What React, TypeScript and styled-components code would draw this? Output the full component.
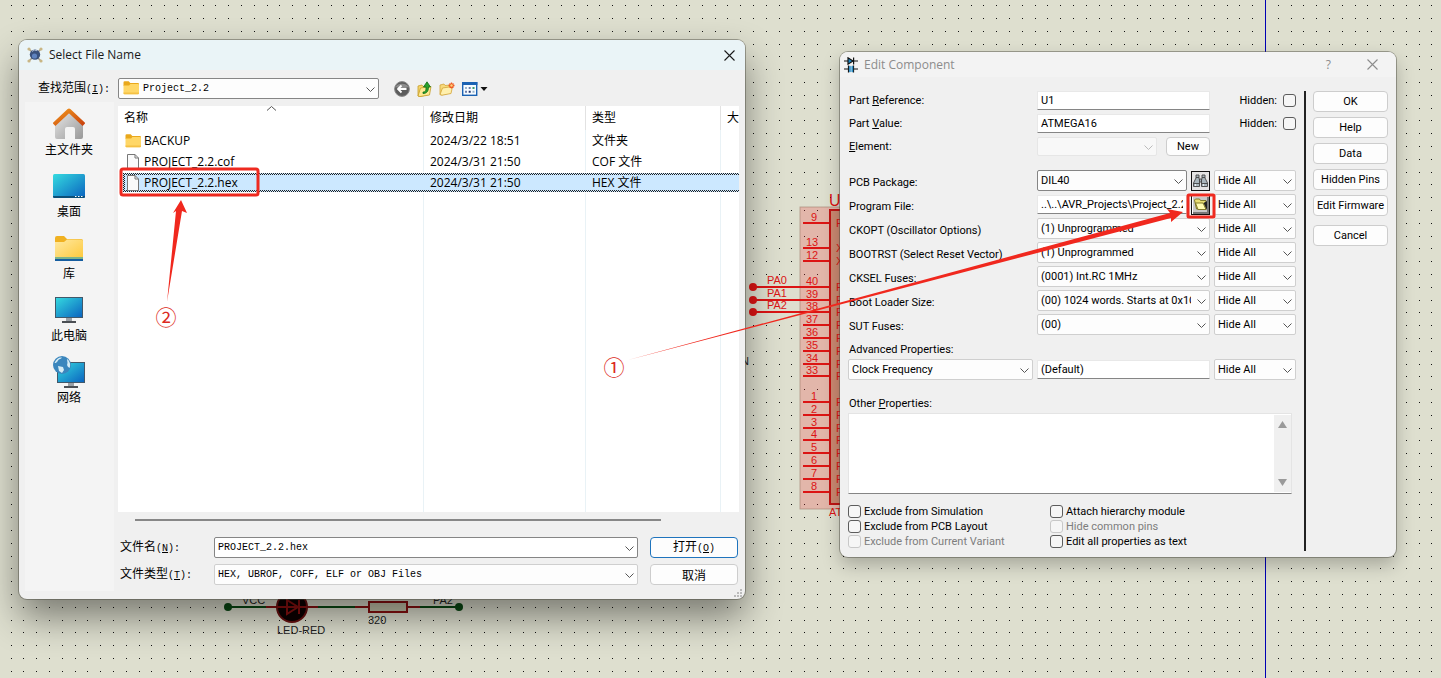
import React from "react";
import styled, { createGlobalStyle, css } from "styled-components";

const ui = `"Liberation Sans", "Noto Sans CJK SC", sans-serif`;
const dialog = `Roboto, "Liberation Sans", sans-serif`;
const shell = `"Open Sans", "Noto Sans CJK SC", sans-serif`;
const mono = `"Liberation Mono", "Noto Sans CJK SC", monospace`;

const GlobalStyle = createGlobalStyle`
  *, *::before, *::after { box-sizing: border-box; }
  body { margin: 0; background: #dedfcf; overflow: hidden; }
  button, input, select, textarea { font: inherit; color: inherit; margin: 0; }
`;

/* ---------- desktop ---------- */

const Desktop = styled.main`
  position: relative;
  min-height: 100vh;
  overflow: hidden;
  color: #000;
`;

const Layer = styled.svg`
  position: absolute;
  inset: 0;
  width: 100%;
  height: 100%;
  pointer-events: none;
  font-family: ${ui};
`;

const Window = styled.section<{ $x: number; $y: number; $w: number; $active?: boolean }>`
  position: absolute;
  left: ${(p) => p.$x}px;
  top: ${(p) => p.$y}px;
  width: ${(p) => p.$w}px;
  border-radius: 8px;
  overflow: hidden;
  background: #f0f0f0;
  font-family: ${dialog};
  font-size: 11px;
  line-height: 14px;
  box-shadow: 0 0 0 1px rgba(70, 70, 60, 0.45),
    ${(p) => (p.$active ? "0 18px 36px rgba(0, 0, 0, 0.45)" : "0 8px 18px rgba(0, 0, 0, 0.25)")};
`;

const TitleBar = styled.header<{ $active?: boolean }>`
  display: flex;
  align-items: center;
  height: ${(p) => (p.$active ? 30 : 25)}px;
  padding: 0 ${(p) => (p.$active ? 10 : 18)}px 0 ${(p) => (p.$active ? 8 : 4)}px;
  gap: 6px;
  background: ${(p) => (p.$active ? "#eaf4f7" : "#f3f3f3")};
  color: ${(p) => (p.$active ? "#1a1a1a" : "#8c8c8c")};
  font-family: ${shell};
  font-size: 12px;
  line-height: 16px;
`;

const Title = styled.h1`
  flex: 1;
  margin: 0;
  font: inherit;
`;

const PlainButton = styled.button`
  display: flex;
  align-items: center;
  justify-content: center;
  padding: 0;
  border: 0;
  background: none;
`;

const CaptionButtons = styled.div`
  display: flex;
  gap: 36px;
`;

/* ---------- shared controls ---------- */

const SelectBox = styled.span`
  position: relative;
  display: block;
  min-width: 0;
  flex: 1;
`;

type Tone = "strong" | "soft" | "off";

const SelectEl = styled.select<{ $tone: Tone; $h: number; $indent?: number }>`
  display: block;
  width: 100%;
  height: ${(p) => p.$h}px;
  padding: 0 18px 0 ${(p) => p.$indent ?? 3}px;
  appearance: none;
  border: 1px solid ${(p) => (p.$tone === "strong" ? "#858585" : p.$tone === "soft" ? "#cfcfcf" : "#e6e6e6")};
  border-radius: 2px;
  background: ${(p) => (p.$tone === "off" ? "#f8f8f8" : "#fdfdfd")};
  opacity: 1;
`;

const SelectMark = styled.svg<{ $off?: boolean }>`
  position: absolute;
  right: 4px;
  top: 50%;
  width: 9px;
  height: 5px;
  margin-top: -2px;
  pointer-events: none;
  fill: none;
  stroke: ${(p) => (p.$off ? "#bbb" : "#555")};
`;

const LeadIcon = styled.span`
  position: absolute;
  left: 5px;
  top: 3px;
  display: flex;
  pointer-events: none;
`;

const Chevron = ({ off }: { off?: boolean }) => (
  <SelectMark $off={off} viewBox="0 0 9 5">
    <path d="M.5 .5l4 4 4-4" />
  </SelectMark>
);

function Select(p: {
  value: string;
  label?: string;
  id?: string;
  tone?: Tone;
  height?: number;
  indent?: number;
  icon?: React.ReactNode;
}) {
  const off = p.tone === "off";
  return (
    <SelectBox>
      <SelectEl
        id={p.id}
        aria-label={p.label}
        $tone={p.tone ?? "soft"}
        $h={p.height ?? 21}
        $indent={p.indent}
        disabled={off}
      >
        <option>{p.value}</option>
      </SelectEl>
      {p.icon && <LeadIcon>{p.icon}</LeadIcon>}
      <Chevron off={off} />
    </SelectBox>
  );
}

const TextInput = styled.input`
  flex: 1;
  min-width: 0;
  width: 100%;
  height: 19px;
  padding: 0 3px;
  border: 1px solid #e8e8e8;
  border-bottom-color: #858585;
  border-radius: 1px;
  background: #fff;
`;

const Button = styled.button<{ $primary?: boolean }>`
  padding: 0;
  border: 1px solid ${(p) => (p.$primary ? "#1f74bd" : "#cdcdcd")};
  border-radius: 4px;
  background: #fdfdfd;
  text-align: center;
  white-space: nowrap;
`;

/* ---------- file dialog ---------- */

const FileBody = styled.div`
  padding: 8px 6px;
  font-family: ${shell};
  font-size: 12px;
  line-height: 16px;
`;

const LookIn = styled.div`
  display: flex;
  align-items: center;
  padding-left: 13px;
  font-family: ${mono};
  font-size: 10px;
`;

const FieldLabel = styled.label<{ $w?: number }>`
  width: ${(p) => (p.$w ? `${p.$w}px` : "auto")};
  font-family: "Noto Sans CJK SC", sans-serif;
  font-size: 12px;
  white-space: nowrap;
`;

const Key = styled.span`
  font-family: ${mono};
  font-size: 10px;
`;

const Folders = styled.div`
  flex: 0 0 261px;
  display: flex;
`;

const Tools = styled.div`
  display: flex;
  align-items: center;
  gap: 7px;
  margin-left: 15px;
`;

const Content = styled.div`
  display: flex;
  gap: 4px;
  margin-top: 3px;
`;

const Places = styled.nav`
  flex: 0 0 89px;
  display: flex;
  flex-direction: column;
  gap: 12px;
  padding: 6px 1px 0 0;
  background: #f4f4f4;
`;

const Place = styled.button`
  display: flex;
  flex-direction: column;
  align-items: center;
  gap: 2px;
  padding: 0;
  border: 0;
  background: none;
`;

const Panel = styled.div`
  flex: 1;
  min-width: 0;
  padding: 4px 0 6px;
`;

const FileList = styled.div`
  height: 406px;
  padding-left: 5px;
  background: #fff;
  overflow: hidden;
`;

const Table = styled.table`
  width: 100%;
  height: 100%;
  table-layout: fixed;
  border-collapse: separate;
  border-spacing: 0;

  th, td {
    padding: 0 0 0 6px;
    border-left: 1px solid #e9f2f6;
    font-weight: 400;
    text-align: left;
    white-space: nowrap;
    overflow: hidden;
  }
  th { height: 24px; border-left-color: #e2e2e2; position: relative; }
  th:first-child, td:first-child { padding-left: 1px; border-left: 0; }
`;

const Col = styled.col<{ $w?: number }>`
  width: ${(p) => (p.$w ? `${p.$w}px` : "auto")};
`;

const Row = styled.tr<{ $selected?: boolean }>`
  height: 21px;
  ${(p) =>
    p.$selected &&
    css`
      background: linear-gradient(#fff, #fff) 0 0 / 100% 1px no-repeat,
        linear-gradient(#fff, #fff) 0 100% / 100% 1px no-repeat,
        linear-gradient(#cce8ff, #cce8ff) 2px 3px / 100% 15px no-repeat,
        repeating-conic-gradient(#222 0 25%, #cce8ff 0 50%) 0 0 / 2px 2px;
      td { border-left-color: transparent; }
    `}
  td { height: 21px; }
`;

const NameCell = styled.span`
  display: flex;
  align-items: center;
  gap: 2px;
  padding-left: 1px;
  svg { flex: none; }
`;

const SortMark = styled.svg`
  position: absolute;
  left: 143px;
  top: 0;
`;

const ScrollBar = styled.div`
  height: 2px;
  margin: 7px 78px 0 17px;
  background: #878787;
`;

const FileForm = styled.div`
  display: grid;
  grid-template-columns: 94px 1fr 88px;
  grid-auto-rows: 21px;
  align-items: center;
  row-gap: 6px;
  margin: 16px 1px 0 2px;
  font-family: ${mono};
  font-size: 10px;
`;

const Combo = styled.div`
  position: relative;
  margin-right: 12px;
`;

const ComboInput = styled.input`
  display: block;
  width: 100%;
  height: 21px;
  padding: 0 18px 0 3px;
  border: 1px solid #858585;
  border-radius: 2px;
  background: #fff;
`;

const FormButton = styled(Button)`
  height: 21px;
  font-family: "Noto Sans CJK SC", sans-serif;
  font-size: 12px;
  line-height: 14px;
`;

const Grip = styled.svg`
  position: absolute;
  right: 3px;
  bottom: 2px;
`;

/* ---------- component dialog ---------- */

const EditBody = styled.div`
  display: flex;
  padding: 14px 8px 6px;
`;

const Main = styled.div`
  flex: 1;
  min-width: 0;
`;

const Rows = styled.div<{ $h: number; $gap: number; $top?: number }>`
  display: grid;
  grid-template-columns: 185px 1fr 82px;
  grid-auto-rows: ${(p) => p.$h}px;
  column-gap: 4px;
  row-gap: ${(p) => p.$gap}px;
  align-items: center;
  margin-top: ${(p) => p.$top ?? 0}px;
`;

const RowLabel = styled.label<{ $low?: boolean }>`
  padding: ${(p) => (p.$low ? 5 : 0)}px 0 0 1px;
  white-space: nowrap;
`;

const BlockLabel = styled.label<{ $top: number }>`
  display: block;
  margin-top: ${(p) => p.$top}px;
  padding-left: 1px;
  margin-bottom: 2px;
`;

const Field = styled.div`
  display: flex;
  align-items: center;
  gap: 4px;
  min-width: 0;
`;

const HiddenLabel = styled.label`
  display: flex;
  align-items: center;
  justify-content: flex-end;
  gap: 6px;
`;

const Check = styled.input`
  appearance: none;
  flex: none;
  width: 13px;
  height: 13px;
  border: 1px solid #5c5c5c;
  border-radius: 3px;
  background: #f6f6f6;
  &:disabled { border-color: #c8c8c8; }
`;

const NewButton = styled(Button)`
  width: 44px;
  height: 19px;
  margin-left: 5px;
`;

const ToolButton = styled.button<{ $raised?: boolean }>`
  display: flex;
  align-items: center;
  justify-content: center;
  width: 19px;
  height: 20px;
  padding: 0;
  border: 1px solid #111;
  background: ${(p) => (p.$raised ? "#c8c8c8" : "#e4e4e4")};
  ${(p) => p.$raised && "box-shadow: inset 1px 1px #fff, inset -2px -2px #777;"}
`;

const MemoBox = styled.div`
  display: flex;
  height: 81px;
  margin-right: 4px;
  padding-top: 1px;
  border: 1px solid #e4e4e4;
  border-bottom-color: #858585;
  background: #fff;
`;

const Memo = styled.textarea`
  flex: 1;
  padding: 2px;
  border: 0;
  resize: none;
  overflow: hidden;
  background: transparent;
`;

const MemoScroll = styled.div`
  display: flex;
  flex-direction: column;
  justify-content: space-between;
  align-items: center;
  width: 17px;
  padding: 6px 0;
  margin-bottom: 1px;
  background: #f0f0f0;
`;

const Options = styled.div`
  display: grid;
  grid-template-columns: 202px 1fr;
  grid-auto-rows: 15px;
  margin-top: 10px;
`;

const Option = styled.label<{ $off?: boolean }>`
  display: flex;
  align-items: center;
  gap: 3px;
  color: ${(p) => (p.$off ? "#7d7d7d" : "#000")};
`;

const Actions = styled.div`
  display: flex;
  flex-direction: column;
  gap: 5px;
  width: 84px;
  min-height: 460px;
  margin-left: 8px;
  padding-left: 7px;
  border-left: 2px solid #222;
`;

const Action = styled(Button)<{ $apart?: boolean }>`
  height: 21px;
  margin-top: ${(p) => (p.$apart ? 4 : 0)}px;
`;

/* ---------- icons ---------- */

const CloseIcon = () => (
  <svg width="11" height="11" viewBox="0 0 11 11" fill="none" stroke="currentColor" strokeWidth="1.1">
    <path d="M.5.5l10 10M10.5.5l-10 10" />
  </svg>
);

const AppIcon = () => (
  <svg width="16" height="16" viewBox="0 0 16 16">
    <path d="M2 2l12 12M14 2L2 14" stroke="#a9a08c" strokeWidth="1.6" />
    <g fill="#c9b684">
      <circle cx="2" cy="2" r="1.6" />
      <circle cx="14" cy="2" r="1.6" />
      <circle cx="2" cy="14" r="1.6" />
      <circle cx="14" cy="14" r="1.6" />
    </g>
    <circle cx="8" cy="7.6" r="5.2" fill="#39517c" />
    <circle cx="7.500" cy="9" r="2.6" fill="#5f83bf" />
    <path d="M5 4.500a4 4 0 0 1 5-.8" stroke="#aab8d0" fill="none" />
  </svg>
);

const PartIcon = () => (
  <svg width="14" height="16" viewBox="0 0 14 16" stroke="#111" strokeWidth="1.2">
    <path d="M0 4h14M0 12h4M10 12h4" />
    <path d="M4 .8v6.4L9 4z" fill="#1b86c4" />
    <path d="M9.6.5v7M4.5 8.5v7M9.5 8.5v7" />
    <path d="M5.4 9.2h1v5.6h-1zM7.8 9.2h1v5.6h-1z" fill="#1b86c4" stroke="#1b86c4" strokeWidth=".6" />
  </svg>
);

const FolderIcon = () => (
  <svg width="17" height="14" viewBox="0 0 17 14">
    <path d="M.5 1.5A1.2 1.2 0 0 1 1.7.3h4l1.6 1.6H15a1 1 0 0 1 1 1V5H.5z" fill="#e9a81c" />
    <path d="M.5 4.6h5.6l1.3-1.7H15a1 1 0 0 1 1 1v8.3a1 1 0 0 1-1 1H1.500a1 1 0 0 1-1-1z" fill="#ffd767" />
    <path d="M.5 11.500v.7a1 1 0 0 0 1 1H15a1 1 0 0 0 1-1v-.7z" fill="#f5c144" />
  </svg>
);

const PageIcon = () => (
  <svg width="17" height="16" viewBox="0 0 17 16" fill="#fafafa" stroke="#777">
    <path d="M2.500.5h7.500l3.500 3.500v11.500h-11z" />
    <path d="M10 .5v3.500h3.500" fill="none" />
  </svg>
);

const BackIcon = () => (
  <svg width="16" height="16" viewBox="0 0 16 16">
    <circle cx="8" cy="8" r="7.4" fill="#5c5c5c" stroke="#8b8b8b" />
    <path d="M1.500 6a7 5 0 0 1 13 0A9 4 0 0 1 1.500 6" fill="#8d8d8d" />
    <path d="M12.500 8h-8M7.500 4.500L4 8l3.500 3.500" fill="none" stroke="#fff" strokeWidth="1.8" />
  </svg>
);

const UpIcon = () => (
  <svg width="15" height="16" viewBox="0 0 15 16">
    <path d="M1 5l4-1 1 1.500 6-1v9L3 15.500 1 15z" fill="#f4d56c" stroke="#c79d28" strokeWidth=".8" />
    <path d="M1 15l2.500-8L14 5.500 12.500 14 3 15.500z" fill="#ffe991" stroke="#c79d28" strokeWidth=".8" />
    <path d="M6 11c3 0 3-2 3-5H6.500L10 .8 13.500 6h-2c0 4-1.500 6.500-5.500 6.500z" fill="#2ba02b" stroke="#14701a" strokeWidth=".8" />
  </svg>
);

const NewFolderIcon = () => (
  <svg width="16" height="14" viewBox="0 0 16 14">
    <path d="M1 3l4-1 1 1.500 5-.5v8L2.500 13 1 12.500z" fill="#f8da7b" stroke="#d3a53a" strokeWidth=".8" />
    <path d="M1 12.500L3.500 6 13.500 4.500 12 11.500 3 13.200z" fill="#fff0ad" stroke="#d3a53a" strokeWidth=".8" />
    <path d="M12.500 .5v6M9.500 3.500h6M10.500 1.500l4 4M14.500 1.500l-4 4" stroke="#ee5b24" strokeWidth="1.300" />
    <circle cx="12.500" cy="3.500" r="1.200" fill="#ffd27a" />
  </svg>
);

const ViewIcon = () => (
  <svg width="26" height="14" viewBox="0 0 26 14">
    <rect x=".7" y=".7" width="14" height="12.600" fill="#f6fbff" stroke="#1b62b3" strokeWidth="1.400" />
    <path d="M0 0h15.400v3H0z" fill="#1b62b3" />
    <path d="M3 5h2v2H3zM10.500 8.800h2v2h-2z" fill="#9bb4cc" />
    <path d="M6.700 5h2v2h-2zM3 8.800h2v2H3z" fill="#6c7ca8" />
    <path d="M10.500 5h2v2h-2z" fill="#3b9b6a" />
    <path d="M6.700 8.800h2v2h-2z" fill="#22336c" />
    <path d="M18.500 5h7l-3.500 4z" fill="#111" />
  </svg>
);

const HomeIcon = () => (
  <svg width="32" height="32" viewBox="0 0 32 32">
    <defs>
      <linearGradient id="wall" x2="1" y2="1">
        <stop stopColor="#e8e8e8" />
        <stop offset="1" stopColor="#989898" />
      </linearGradient>
      <linearGradient id="roof" x2="1" y2="1">
        <stop stopColor="#f0951d" />
        <stop offset="1" stopColor="#c9420e" />
      </linearGradient>
    </defs>
    <path d="M2 15L16 3l14 12v14a2 2 0 0 1-2 2h-6V21a2 2 0 0 0-2-2h-6a2 2 0 0 0-2 2v10H4a2 2 0 0 1-2-2z" fill="url(#wall)" />
    <path d="M1 16.500L16 2.500l15 14" fill="none" stroke="url(#roof)" strokeWidth="4" strokeLinejoin="round" />
  </svg>
);

const ScreenGradient = ({ id }: { id: string }) => (
  <defs>
    <linearGradient id={id} x2="1" y2="1">
      <stop stopColor="#35dbe0" />
      <stop offset="1" stopColor="#0a62bf" />
    </linearGradient>
  </defs>
);

const DesktopIcon = () => (
  <svg width="32" height="32" viewBox="0 0 32 32">
    <ScreenGradient id="desk" />
    <rect y="4" width="32" height="24" rx="1.500" fill="url(#desk)" />
    <path d="M0 26h32v.5a1.500 1.500 0 0 1-1.500 1.500h-29A1.500 1.500 0 0 1 0 26.500z" fill="#0b4f78" />
    <path d="M22 26.500h1.500M25 26.500h1.500M28 26.500h1.500" stroke="#fff" />
  </svg>
);

const LibraryIcon = () => (
  <svg width="32" height="32" viewBox="0 0 32 32">
    <defs>
      <linearGradient id="lib" x2="1" y2="1">
        <stop stopColor="#ffe9a2" />
        <stop offset="1" stopColor="#fdc93c" />
      </linearGradient>
    </defs>
    <path d="M2 6a2 2 0 0 1 2-2h7l3 3h14a2 2 0 0 1 2 2v3H2z" fill="#f0b121" />
    <path d="M2 10h9l3-2.500h14a2 2 0 0 1 2 2V26H2z" fill="url(#lib)" />
    <path d="M2 25h28v2H2z" fill="#7db48b" />
    <path d="M2 27h28v2H2z" fill="#155da0" />
  </svg>
);

const ComputerIcon = () => (
  <svg width="32" height="32" viewBox="0 0 32 32">
    <ScreenGradient id="pc" />
    <rect x="2.500" y="3.500" width="27" height="20" fill="url(#pc)" stroke="#41586a" />
    <path d="M13 24h6v3h-6z" fill="#9aa0a6" />
    <path d="M9 27h14v2H9z" fill="#4b4f54" />
  </svg>
);

const NetworkIcon = () => (
  <svg width="32" height="32" viewBox="0 0 32 32">
    <ScreenGradient id="net" />
    <rect x="4.500" y="6.500" width="27" height="20" fill="url(#net)" stroke="#41586a" />
    <path d="M15 27h6v3h-6z" fill="#9aa0a6" />
    <path d="M11 30h14v2H11z" fill="#4b4f54" />
    <circle cx="9" cy="9" r="9" fill="#3b86bd" />
    <path d="M1.500 7C3 3 6 1 9 1.500c-1 2-3 1-4 3S3 7 1.500 7zM14 3c3 2 4 6 2.500 9-2-1-3-3-2-5zM5 10l5 1 1 3-2 3-3-2z" fill="#d5ecf5" />
  </svg>
);

const BinocularsIcon = () => (
  <svg width="15" height="14" viewBox="0 0 15 14" stroke="#444" strokeWidth=".9" fill="#a9b6bc">
    <path d="M3 1h3v3l.5 2v6.500h-6V9L3 4zM9 1h3v3l2.500 5v3.500h-6V6L9 4z" />
    <path d="M6.500 5h2v3h-2zM3 3.500h3M9 3.500h3M.5 9.500h6M8.500 9.500h6" />
    <path d="M2.500 10v2M10.500 10v2" stroke="#eef3f5" />
  </svg>
);

const OpenIcon = () => (
  <svg width="14" height="13" viewBox="0 0 14 13">
    <path d="M.5 2l1-1h4l1 1.500h5.500V11H2.500z" fill="#e9df74" stroke="#77701f" strokeWidth=".9" />
    <path d="M1.500 5H9l3 6.500H4z" fill="#fffbb0" stroke="#77701f" strokeWidth=".9" />
    <path d="M9.500 5l3.500 7V3z" fill="#222" />
  </svg>
);

/* ---------- schematic ---------- */

const DOT_X = [11, 23, 36, 49, 62];
const DOT_Y = [5, 18, 31, 44, 56];
const PINS: [string, number][] = [
  ["9", 223], ["13", 248], ["12", 261], ["40", 287], ["39", 300], ["38", 312], ["37", 325],
  ["36", 338], ["35", 351], ["34", 364], ["33", 376], ["1", 402], ["2", 415], ["3", 428],
  ["4", 440], ["5", 453], ["6", 466], ["7", 479], ["8", 492],
];

const Schematic = () => (
  <Layer aria-hidden="true">
    <defs>
      <pattern id="dots" width="64" height="64" patternUnits="userSpaceOnUse">
        <g fill="#111" shapeRendering="crispEdges">
          {DOT_X.flatMap((x) => DOT_Y.map((y) => <rect key={`${x}-${y}`} x={x} y={y} width="1" height="1" />))}
        </g>
      </pattern>
    </defs>
    <rect width="100%" height="100%" fill="#dedfcf" />
    <rect x="830" y="210" width="120" height="294" fill="#c0a585" />
    <rect width="100%" height="100%" fill="url(#dots)" />
    <rect x="1265" width="1" height="100%" fill="#0000b4" />
    <rect x="800" y="207" width="160" height="302" fill="#f03c3c" fillOpacity=".25" stroke="#a08070" strokeOpacity=".6" />
    <g stroke="#dc1414" strokeWidth="2">
      {PINS.map(([n, y]) => (
        <path key={n} d={`M803 ${y}h27`} />
      ))}
      <path d="M753 287h50M753 300h50M753 312h50" />
      <path d="M900 210h-70v294h70" fill="none" stroke="#c01414" />
    </g>
    <g fill="#dc1414" fontSize="11">
      {[287, 300, 312].map((y, i) => (
        <g key={y}>
          <circle cx="753" cy={y} r="4" />
          <text x="767" y={y - 3}>{`PA${i}`}</text>
        </g>
      ))}
      <g textAnchor="middle">
        {PINS.map(([n, y]) => (
          <text key={n} x={n.length > 1 ? 812 : 814} y={y - 2}>{n}</text>
        ))}
      </g>
      {PINS.map(([n, y]) => (
        <text key={n} x="836" y={y + 4}>{n === "9" ? "R" : n === "13" || n === "12" ? "X" : "P"}</text>
      ))}
      <text x="829" y="206" fontSize="16">U</text>
      <text x="829" y="516">AT</text>
    </g>
    <g strokeWidth="2" fill="none">
      <path d="M228 607h38M318 607h37M420 607h39" stroke="#0a4a14" />
      <path d="M266 607h14M305 607h13M355 607h13M408 607h12" stroke="#8a1010" />
      <circle cx="292" cy="607" r="15" fill="#0c0000" stroke="#6a1010" />
      <path d="M277 607h30M287 600v14l11-7zM299 600v14" stroke="#8a1010" />
      <rect x="369" y="602" width="38" height="10" fill="#c6c6ac" stroke="#8a1010" />
    </g>
    <g fill="#0a4a14">
      <circle cx="228" cy="607" r="4" />
      <circle cx="459" cy="607" r="4" />
    </g>
    <g fontSize="11" fill="#222">
      <text x="242" y="604">VCC</text>
      <text x="433" y="604">PA2</text>
      <text x="277" y="634">LED-RED</text>
      <text x="368" y="624">320</text>
      <text x="741" y="365">N</text>
    </g>
  </Layer>
);

const Annotations = () => (
  <Layer>
    <g fill="none" stroke="#ee2a20" strokeWidth="3">
      <rect x="121" y="169" width="137" height="26" rx="2" />
      <rect x="1188" y="195" width="26" height="22" rx="1" />
    </g>
    <g fill="#f0281e">
      <path d="M628 360L1170 213 1167 209 1183 212 1171 222 1171 218z" />
      <path d="M167 302L176 211 173 213 181 200 187 213 182 211z" />
    </g>
    <g fill="#dc2a22" fontSize="21" textAnchor="middle" fontFamily="Noto Sans CJK SC, sans-serif">
      <text x="614" y="375">①</text>
      <text x="166" y="325">②</text>
    </g>
  </Layer>
);

/* ---------- windows ---------- */

const PLACES = [
  { name: "主文件夹", icon: <HomeIcon /> },
  { name: "桌面", icon: <DesktopIcon /> },
  { name: "库", icon: <LibraryIcon /> },
  { name: "此电脑", icon: <ComputerIcon /> },
  { name: "网络", icon: <NetworkIcon /> },
];

const FILES = [
  { name: "BACKUP", date: "2024/3/22 18:51", type: "文件夹", folder: true },
  { name: "PROJECT_2.2.cof", date: "2024/3/31 21:50", type: "COF 文件" },
  { name: "PROJECT_2.2.hex", date: "2024/3/31 21:50", type: "HEX 文件", selected: true },
];

const FileDialog = () => (
  <Window $x={19} $y={40} $w={726} $active>
    <TitleBar $active>
      <AppIcon />
      <Title>Select File Name</Title>
      <PlainButton aria-label="Close"><CloseIcon /></PlainButton>
    </TitleBar>
    <FileBody>
      <LookIn>
        <FieldLabel htmlFor="look" $w={80}>查找范围<Key>(<u>I</u>):</Key></FieldLabel>
        <Folders>
          <Select id="look" value="Project_2.2" tone="strong" indent={24} icon={<FolderIcon />} />
        </Folders>
        <Tools>
          <PlainButton aria-label="Back"><BackIcon /></PlainButton>
          <PlainButton aria-label="Up one level"><UpIcon /></PlainButton>
          <PlainButton aria-label="New folder"><NewFolderIcon /></PlainButton>
          <PlainButton aria-label="View menu"><ViewIcon /></PlainButton>
        </Tools>
      </LookIn>
      <Content>
        <Places>
          {PLACES.map((p) => (
            <Place key={p.name}>
              {p.icon}
              <span>{p.name}</span>
            </Place>
          ))}
        </Places>
        <Panel>
          <FileList>
            <Table>
              <colgroup>
                <Col $w={300} /><Col $w={162} /><Col $w={135} /><Col />
              </colgroup>
              <thead>
                <tr>
                  <th>
                    名称
                    <SortMark width="11" height="5" viewBox="0 0 11 5" fill="none" stroke="#555">
                      <path d="M1 4.500l4.500-4 4.500 4" />
                    </SortMark>
                  </th>
                  <th>修改日期</th>
                  <th>类型</th>
                  <th>大</th>
                </tr>
              </thead>
              <tbody>
                {FILES.map((f) => (
                  <Row key={f.name} $selected={f.selected}>
                    <td><NameCell>{f.folder ? <FolderIcon /> : <PageIcon />}{f.name}</NameCell></td>
                    <td>{f.date}</td>
                    <td>{f.type}</td>
                    <td />
                  </Row>
                ))}
                <tr><td /><td /><td /><td /></tr>
              </tbody>
            </Table>
          </FileList>
          <ScrollBar />
          <FileForm>
            <FieldLabel htmlFor="fname">文件名<Key>(<u>N</u>):</Key></FieldLabel>
            <Combo>
              <ComboInput id="fname" defaultValue="PROJECT_2.2.hex" />
              <Chevron />
            </Combo>
            <FormButton $primary>打开<Key>(<u>O</u>)</Key></FormButton>
            <FieldLabel htmlFor="ftype">文件类型<Key>(<u>T</u>):</Key></FieldLabel>
            <Combo>
              <Select id="ftype" value="HEX, UBROF, COFF, ELF or OBJ Files" />
            </Combo>
            <FormButton>取消</FormButton>
          </FileForm>
        </Panel>
      </Content>
    </FileBody>
    <Grip width="8" height="8" viewBox="0 0 8 8" fill="#bbb">
      <path d="M6 0h2v2H6zM3 3h2v2H3zM6 3h2v2H6zM0 6h2v2H0zM3 6h2v2H3zM6 6h2v2H6z" />
    </Grip>
  </Window>
);

const FUSES = [
  ["CKOPT (Oscillator Options)", "(1) Unprogrammed"],
  ["BOOTRST (Select Reset Vector)", "(1) Unprogrammed"],
  ["CKSEL Fuses:", "(0001) Int.RC 1MHz"],
  ["Boot Loader Size:", "(00) 1024 words. Starts at 0x1C00"],
  ["SUT Fuses:", "(00)"],
];

const OPTIONS = [
  { name: "Exclude from Simulation" },
  { name: "Attach hierarchy module" },
  { name: "Exclude from PCB Layout" },
  { name: "Hide common pins", off: true },
  { name: "Exclude from Current Variant", off: true },
  { name: "Edit all properties as text" },
];

const HideAll = () => <Select label="Visibility" value="Hide All" />;

const EditDialog = () => (
  <Window $x={840} $y={52} $w={556}>
    <TitleBar>
      <PartIcon />
      <Title>Edit Component</Title>
      <CaptionButtons>
        <PlainButton aria-label="Context help">?</PlainButton>
        <PlainButton aria-label="Close"><CloseIcon /></PlainButton>
      </CaptionButtons>
    </TitleBar>
    <EditBody>
      <Main>
        <Rows $h={19} $gap={4}>
          <RowLabel htmlFor="ref">Part <u>R</u>eference:</RowLabel>
          <TextInput id="ref" defaultValue="U1" />
          <HiddenLabel>Hidden:<Check type="checkbox" /></HiddenLabel>
          <RowLabel htmlFor="val">Part <u>V</u>alue:</RowLabel>
          <TextInput id="val" defaultValue="ATMEGA16" />
          <HiddenLabel>Hidden:<Check type="checkbox" /></HiddenLabel>
          <RowLabel htmlFor="elem"><u>E</u>lement:</RowLabel>
          <Field>
            <Select id="elem" value="" tone="off" height={19} />
            <NewButton>New</NewButton>
          </Field>
        </Rows>
        <Rows $h={21} $gap={3} $top={14}>
          <RowLabel $low htmlFor="pcb">PCB Package:</RowLabel>
          <Field>
            <Select id="pcb" value="DIL40" tone="strong" />
            <ToolButton aria-label="Browse packages"><BinocularsIcon /></ToolButton>
          </Field>
          <HideAll />
          <RowLabel $low htmlFor="prog">Program File:</RowLabel>
          <Field>
            <TextInput id="prog" defaultValue="..\..\AVR_Projects\Project_2.2\PROJECT_2.2.hex" />
            <ToolButton $raised aria-label="Open program file"><OpenIcon /></ToolButton>
          </Field>
          <HideAll />
          {FUSES.map(([name, value]) => (
            <React.Fragment key={name}>
              <RowLabel $low htmlFor={name.split(" ")[0]}>{name}</RowLabel>
              <Select id={name.split(" ")[0]} value={value} />
              <HideAll />
            </React.Fragment>
          ))}
        </Rows>
        <BlockLabel $top={8} htmlFor="adv">Advanced Properties:</BlockLabel>
        <Rows $h={21} $gap={0}>
          <Select id="adv" value="Clock Frequency" />
          <TextInput aria-label="Clock Frequency" defaultValue="(Default)" />
          <HideAll />
        </Rows>
        <BlockLabel $top={17} htmlFor="other">Other <u>P</u>roperties:</BlockLabel>
        <MemoBox>
          <Memo id="other" />
          <MemoScroll>
            <svg width="9" height="7" viewBox="0 0 9 7"><path d="M4.500 0L9 7H0z" fill="#9a9a9a" /></svg>
            <svg width="9" height="7" viewBox="0 0 9 7"><path d="M4.500 7L9 0H0z" fill="#9a9a9a" /></svg>
          </MemoScroll>
        </MemoBox>
        <Options>
          {OPTIONS.map((o) => (
            <Option key={o.name} $off={o.off}>
              <Check type="checkbox" disabled={o.off} />
              {o.name}
            </Option>
          ))}
        </Options>
      </Main>
      <Actions>
        <Action>OK</Action>
        <Action>Help</Action>
        <Action>Data</Action>
        <Action>Hidden Pins</Action>
        <Action>Edit Firmware</Action>
        <Action $apart>Cancel</Action>
      </Actions>
    </EditBody>
  </Window>
);

export default function App() {
  return (
    <Desktop>
      <GlobalStyle />
      <Schematic />
      <EditDialog />
      <FileDialog />
      <Annotations />
    </Desktop>
  );
}
